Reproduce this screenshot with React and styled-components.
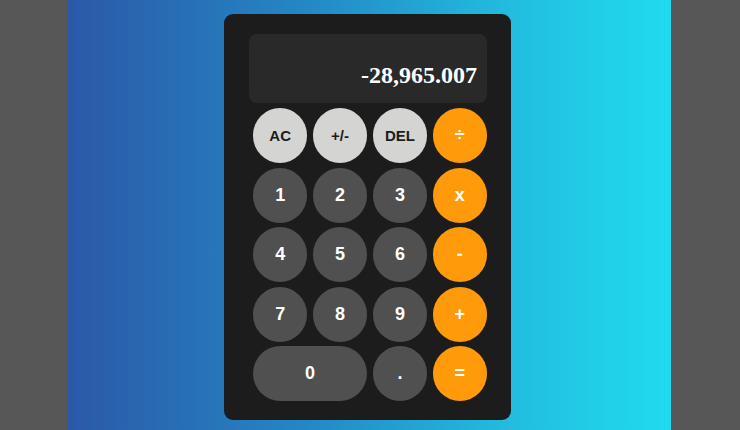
import React from "react";
import styled, { createGlobalStyle } from "styled-components";

const GlobalStyle = createGlobalStyle`
  html, body { margin: 0; padding: 0; height: 100%; }
  body { background: #575757; font-family: "Liberation Sans", Arial, sans-serif; overflow: hidden; }
  #root { height: 100%; }
`;

const Page = styled.div`
  height: 100vh;
  display: flex;
  justify-content: center;
  padding-right: 2px;
  box-sizing: border-box;
`;

const Stage = styled.div`
  width: 603px;
  height: 100%;
  background: linear-gradient(to right, #2b58a8 0%, #2488c6 40%, #22bfe0 75%, #20dbee 100%);
  display: flex;
  justify-content: center;
  align-items: flex-start;
  padding: 14px 3px 0 0;
  box-sizing: border-box;
`;

const Card = styled.div`
  width: 287px;
  box-sizing: border-box;
  background: #1c1c1c;
  border-radius: 9px;
  padding: 20px 24px 19px 25px;
  display: flex;
  flex-direction: column;
  gap: 5px;
`;

const Display = styled.div`
  height: 69px;
  background: #292929;
  border-radius: 8px;
  display: flex;
  justify-content: flex-end;
  align-items: flex-end;
  padding: 0 10px 14px;
  box-sizing: border-box;
  color: #ffffff;
  font-family: "Liberation Serif", "Times New Roman", serif;
  font-weight: bold;
  font-size: 24px;
`;

const Keys = styled.div`
  display: grid;
  grid-template-columns: repeat(4, 1fr);
  grid-auto-rows: 55px;
  column-gap: 5.5px;
  row-gap: 4.5px;
  padding-left: 4px;
`;

const palette = {
  light: { bg: "#d4d4d2", fg: "#1c1c1c", size: "15px" },
  dark: { bg: "#505050", fg: "#ffffff", size: "18px" },
  orange: { bg: "#ff9a0b", fg: "#ffffff", size: "18px" },
};

const Key = styled.button`
  border: none;
  margin: 0;
  padding: 0;
  border-radius: 28px;
  grid-column: span ${(p) => (p.$wide ? 2 : 1)};
  background: ${(p) => palette[p.$kind].bg};
  color: ${(p) => palette[p.$kind].fg};
  font-family: "Liberation Sans", Arial, sans-serif;
  font-weight: bold;
  font-size: ${(p) => palette[p.$kind].size};
  display: flex;
  align-items: center;
  justify-content: center;
  cursor: pointer;
`;

const keys = [
  ["AC", "light"], ["+/-", "light"], ["DEL", "light"], ["÷", "orange"],
  ["1", "dark"], ["2", "dark"], ["3", "dark"], ["x", "orange"],
  ["4", "dark"], ["5", "dark"], ["6", "dark"], ["-", "orange"],
  ["7", "dark"], ["8", "dark"], ["9", "dark"], ["+", "orange"],
  ["0", "dark", true], [".", "dark"], ["=", "orange"],
];

export default function App() {
  return (
    <>
      <GlobalStyle />
      <Page>
        <Stage>
          <Card>
            <Display>-28,965.007</Display>
            <Keys>
              {keys.map(([label, kind, wide]) => (
                <Key key={label} $kind={kind} $wide={wide}>
                  {label}
                </Key>
              ))}
            </Keys>
          </Card>
        </Stage>
      </Page>
    </>
  );
}
